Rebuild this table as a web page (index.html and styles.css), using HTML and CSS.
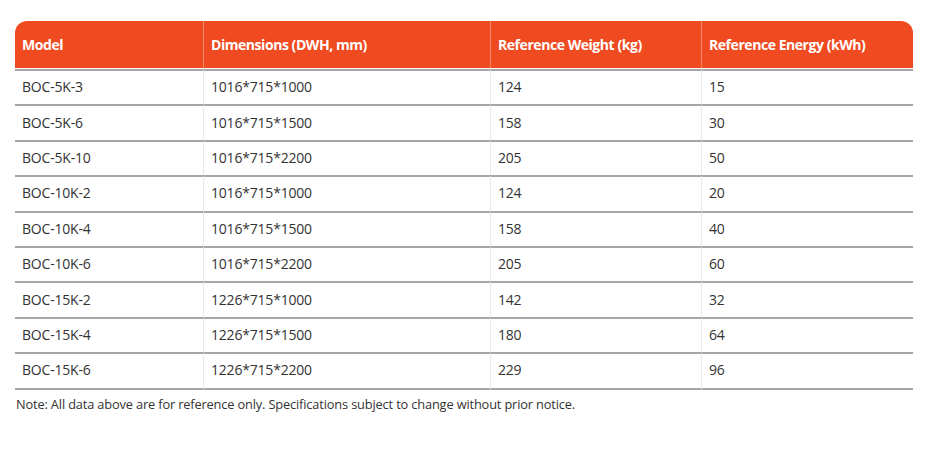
FILE: index.html
```html
<!DOCTYPE html>
<html lang="en">
<head>
<meta charset="utf-8">
<link rel="stylesheet" href="styles.css">
</head>
<body>
<div class="wrap">
  <table class="spec">
    <thead>
      <tr>
        <th class="c1">Model</th>
        <th class="c2">Dimensions (DWH, mm)</th>
        <th class="c3">Reference Weight (kg)</th>
        <th class="c4">Reference Energy (kWh)</th>
      </tr>
    </thead>
    <tbody>
      <tr><td>BOC-5K-3</td><td>1016*715*1000</td><td>124</td><td>15</td></tr>
      <tr><td>BOC-5K-6</td><td>1016*715*1500</td><td>158</td><td>30</td></tr>
      <tr><td>BOC-5K-10</td><td>1016*715*2200</td><td>205</td><td>50</td></tr>
      <tr><td>BOC-10K-2</td><td>1016*715*1000</td><td>124</td><td>20</td></tr>
      <tr><td>BOC-10K-4</td><td>1016*715*1500</td><td>158</td><td>40</td></tr>
      <tr><td>BOC-10K-6</td><td>1016*715*2200</td><td>205</td><td>60</td></tr>
      <tr><td>BOC-15K-2</td><td>1226*715*1000</td><td>142</td><td>32</td></tr>
      <tr><td>BOC-15K-4</td><td>1226*715*1500</td><td>180</td><td>64</td></tr>
      <tr><td>BOC-15K-6</td><td>1226*715*2200</td><td>229</td><td>96</td></tr>
    </tbody>
  </table>
  <p class="note">Note: All data above are for reference only. Specifications subject to change without prior notice.</p>
</div>
</body>
</html>
```
FILE: styles.css
```css
html, body {
  margin: 0;
  padding: 0;
  background: #fff;
}
.wrap {
  padding: 21px 0 0 15px;
  font-family: "Open Sans", "Noto Sans", "Liberation Sans", sans-serif;
  color: #333;
}
.spec {
  width: 898px;
  border-collapse: separate;
  border-spacing: 0;
  table-layout: fixed;
}
.spec th {
  background: #f04a21;
  color: #fff;
  font-weight: 700;
  font-size: 14px;
  text-align: left;
  height: 47px;
  padding: 0 7px;
  border-bottom: 1px solid #fff;
  border-left: 1px solid rgba(255,255,255,0.35);
  letter-spacing: -0.45px;
  white-space: nowrap;
}
.spec th.c1 { width: 174px; border-left: none; border-top-left-radius: 12px; }
.spec th.c2 { width: 272px; }
.spec th.c3 { width: 196px; }
.spec th.c4 { border-top-right-radius: 12px; }
.spec td {
  height: 31.4px;
  padding: 0 7px 2px;
  font-size: 14px;
  letter-spacing: -0.2px;
  border-top: 2px solid #a6a6a6;
  border-left: 1px solid #e8e8e8;
  vertical-align: middle;
}
.spec td:first-child { border-left: none; }
.spec tbody tr:last-child td { border-bottom: 2px solid #a6a6a6; }
.note {
  margin: 5px 0 0 1px;
  font-size: 12.8px;
  letter-spacing: -0.15px;
  color: #333;
}
```
